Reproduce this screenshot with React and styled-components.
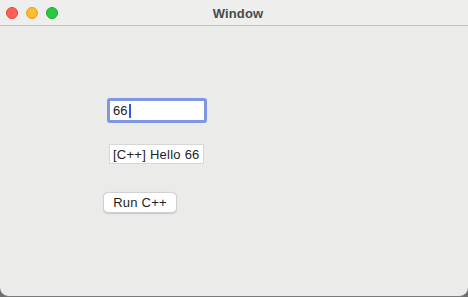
import React, { useState } from "react";
import styled, { createGlobalStyle } from "styled-components";

const GlobalStyle = createGlobalStyle`
  html, body {
    margin: 0;
    padding: 0;
    background: #6e6e6e;
  }
  body {
    font-family: "Liberation Sans", Arial, sans-serif;
  }
`;

// window frame
const Window = styled.div`
  width: 468px;
  height: 296px;
  background: #ebebea;
  border-bottom: 1px solid #7a7a7a;
  border-radius: 0 0 9px 9px;
  display: flex;
  flex-direction: column;
  overflow: hidden;
`;

const TitleBar = styled.div`
  height: 25px;
  flex-shrink: 0;
  display: grid;
  grid-template-columns: 70px 1fr 62px;
  align-items: center;
  background: #eeeeed;
  border-bottom: 1px solid #c4c4c4;
`;

const Lights = styled.div`
  display: flex;
  gap: 8px;
  padding-left: 6px;
`;

const Light = styled.span`
  width: 12px;
  height: 12px;
  border-radius: 50%;
  box-sizing: border-box;
  background: ${(p) => p.$color};
  border: 0.5px solid ${(p) => p.$edge};
`;

const Title = styled.div`
  text-align: center;
  font-size: 13px;
  font-weight: bold;
  color: #4a4a4a;
  padding-top: 1px;
  letter-spacing: 0.1px;
`;

const Content = styled.div`
  display: flex;
  flex-direction: column;
  align-items: flex-start;
  padding: 72px 0 0 103px;
`;

const InputRing = styled.div`
  position: relative;
  margin-left: 4px;
  width: 100px;
  height: 25px;
  box-sizing: border-box;
  border: 3px solid #7f95e6;
  border-radius: 3px;
  background: #ffffff;
  display: flex;
  align-items: center;
`;

const TextInput = styled.input`
  width: 100%;
  height: 100%;
  box-sizing: border-box;
  border: none;
  outline: none;
  padding: 0 0 0 3px;
  font-family: inherit;
  font-size: 13px;
  color: #1a1a1a;
  background: transparent;
  caret-color: transparent;
`;

// drawn caret so it always shows in the screenshot
const Caret = styled.span`
  position: absolute;
  left: 19px;
  top: 3px;
  width: 1.5px;
  height: 14px;
  background: #2a5ce0;
  pointer-events: none;
`;

const Label = styled.div`
  margin-top: 21px;
  margin-left: 6px;
  height: 20px;
  box-sizing: border-box;
  padding: 0 3px;
  display: flex;
  align-items: center;
  background: #ffffff;
  border: 1px solid #d6d6d6;
  font-size: 13px;
  letter-spacing: 0.25px;
  color: #1e1e1e;
`;

const Button = styled.button`
  margin-top: 28px;
  width: 74px;
  height: 21px;
  box-sizing: border-box;
  border: 1px solid #d0d0d0;
  border-radius: 5px;
  background: #ffffff;
  box-shadow: 0 0.5px 1px rgba(0, 0, 0, 0.15);
  font-family: inherit;
  font-size: 13px;
  letter-spacing: 0.2px;
  color: #1e1e1e;
  padding: 0;
  cursor: pointer;
`;

export default function App() {
  const [value, setValue] = useState("66");
  const [output, setOutput] = useState("[C++] Hello 66");

  return (
    <>
      <GlobalStyle />
      <Window>
        <TitleBar>
          <Lights>
            <Light $color="#fe5f57" $edge="#e0443e" />
            <Light $color="#febc2e" $edge="#dea123" />
            <Light $color="#28c840" $edge="#1aab29" />
          </Lights>
          <Title>Window</Title>
          <span />
        </TitleBar>
        <Content>
          <InputRing>
            <TextInput
              value={value}
              autoFocus
              onChange={(e) => setValue(e.target.value)}
            />
            <Caret />
          </InputRing>
          <Label>{output}</Label>
          <Button onClick={() => setOutput(`[C++] Hello ${value}`)}>
            Run C++
          </Button>
        </Content>
      </Window>
    </>
  );
}
